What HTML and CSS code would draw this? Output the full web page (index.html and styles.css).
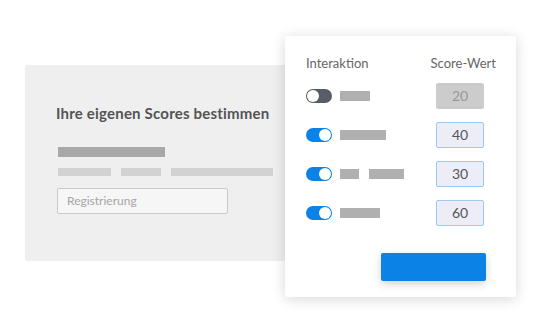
FILE: index.html
```html
<!DOCTYPE html>
<html lang="de">
<head>
    <meta charset="UTF-8">
    <title>Scores bestimmen</title>
    <link rel="stylesheet" href="styles.css">
</head>
<body>
    <div class="stage">
        <div class="setup">
            <h2>Ihre eigenen Scores bestimmen</h2>
            <div class="bar bar-dark"></div>
            <div class="bar-row">
                <span class="bar bar-light w53"></span>
                <span class="bar bar-light w40"></span>
                <span class="bar bar-light w102"></span>
            </div>
            <div class="field">Registrierung</div>
        </div>

        <div class="scores">
            <div class="head">Interaktion</div>
            <div class="head head-right">Score-Wert</div>

            <div class="item">
                <span class="toggle"></span>
                <span class="bar bar-mid w30"></span>
            </div>
            <div class="value value-off">20</div>

            <div class="item">
                <span class="toggle on"></span>
                <span class="bar bar-mid w46"></span>
            </div>
            <div class="value">40</div>

            <div class="item">
                <span class="toggle on"></span>
                <span class="bar bar-mid w19"></span>
                <span class="bar bar-mid w35 gap"></span>
            </div>
            <div class="value">30</div>

            <div class="item">
                <span class="toggle on"></span>
                <span class="bar bar-mid w40"></span>
            </div>
            <div class="value">60</div>

            <div class="actions">
                <button class="save"></button>
            </div>
        </div>
    </div>
</body>
</html>
```

FILE: styles.css
```css
body {
    margin: 0;
    background: #fff;
    font-family: Lato, "Open Sans", sans-serif;
}
.stage {
    position: relative;
    width: 560px;
    height: 334px;
    overflow: hidden;
}
.setup {
    margin: 65px 0 0 25px;
    width: 243px;
    padding: 39px 0 47px 31px;
    background: #efefef;
    border-radius: 2px;
}
.setup h2 {
    margin: 0;
    font-size: 15px;
    line-height: 18px;
    font-weight: 700;
    letter-spacing: 0.2px;
    color: #545454;
}
.bar {
    display: block;
}
.bar-dark {
    width: 107px;
    height: 10px;
    margin: 25px 0 0 2px;
    background: #a8a8a8;
}
.bar-row {
    display: flex;
    gap: 10px;
    margin: 11px 0 0 2px;
}
.bar-light {
    height: 8px;
    background: #d2d2d2;
}
.w19 { width: 19px; }
.w30 { width: 30px; }
.w35 { width: 35px; }
.w40 { width: 40px; }
.w46 { width: 46px; }
.w53 { width: 53px; }
.w102 { width: 102px; }
.field {
    width: 160px;
    height: 24px;
    margin: 12px 0 0 1px;
    padding-left: 9px;
    border: 1px solid #c9c9c9;
    border-radius: 2px;
    background: #f6f6f6;
    font-size: 12px;
    line-height: 24px;
    color: #a6a6a6;
}
.scores {
    position: absolute;
    left: 285px;
    top: 36px;
    width: 190px;
    padding: 19px 20px 16px 21px;
    background: #fff;
    border-radius: 2px;
    box-shadow: 0 2px 14px rgba(0, 0, 0, 0.16);
    display: grid;
    grid-template-columns: 1fr 68px;
    row-gap: 13px;
    align-items: center;
}
.head {
    font-size: 13px;
    line-height: 16px;
    color: #666;
    white-space: nowrap;
    margin-bottom: -1px;
}
.head-right {
    text-align: right;
}
.item {
    display: flex;
    align-items: center;
    gap: 8px;
}
.gap {
    margin-left: 2px;
}
.bar-mid {
    height: 10px;
    background: #b0b0b0;
}
.toggle {
    position: relative;
    width: 26px;
    height: 14px;
    border-radius: 7px;
    background: #575d66;
}
.toggle::after {
    content: "";
    position: absolute;
    left: 1px;
    top: 1px;
    width: 12px;
    height: 12px;
    border-radius: 50%;
    background: #fff;
}
.toggle.on {
    background: #0a82e6;
}
.toggle.on::after {
    left: 13px;
}
.value {
    width: 46px;
    height: 24px;
    margin-left: 8px;
    box-sizing: content-box;
    border: 1px solid #9ccaf0;
    border-radius: 2px;
    background: #ededf7;
    font-size: 14px;
    line-height: 24px;
    text-align: center;
    color: #555;
}
.value-off {
    border-color: #cccccc;
    background: #cccccc;
    color: #999;
}
.actions {
    grid-column: 1 / 3;
    display: flex;
    justify-content: flex-end;
    padding-right: 10px;
    margin-top: 14px;
}
.save {
    width: 105px;
    height: 28px;
    border: none;
    border-radius: 2px;
    background: #0a82e6;
    box-shadow: 0 3px 8px rgba(0, 0, 0, 0.18);
}
```
